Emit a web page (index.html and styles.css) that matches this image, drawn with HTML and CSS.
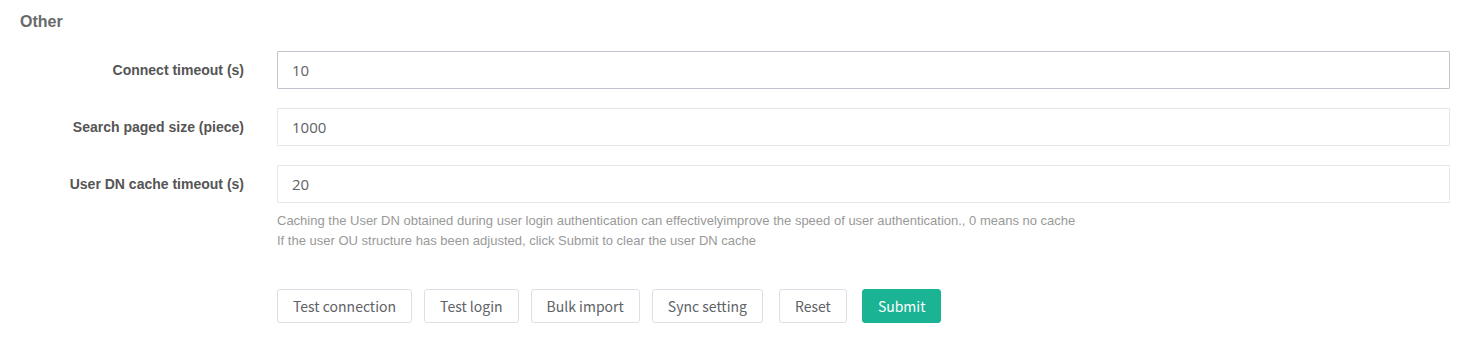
FILE: index.html
```html
<!DOCTYPE html>
<html lang="en">
  <head>
    <meta charset="UTF-8" />
    <meta name="viewport" content="width=device-width, initial-scale=1.0" />
    <title>LDAP setting</title>
    <link rel="stylesheet" href="styles.css">
  </head>
  <body>
    <main class="panel">
      <h3 class="panel__title">Other</h3>

      <form class="form">
        <div class="form__row">
          <label class="form__label">Connect timeout (s)</label>
          <div class="form__field">
            <input class="form__input form__input--hover" type="text" value="10" />
          </div>
        </div>

        <div class="form__row">
          <label class="form__label">Search paged size (piece)</label>
          <div class="form__field">
            <input class="form__input" type="text" value="1000" />
          </div>
        </div>

        <div class="form__row">
          <label class="form__label">User DN cache timeout (s)</label>
          <div class="form__field">
            <input class="form__input" type="text" value="20" />
            <p class="form__help">
              Caching the User DN obtained during user login authentication can effectivelyimprove the speed of user authentication., 0 means no cache<br />
              If the user OU structure has been adjusted, click Submit to clear the user DN cache
            </p>
          </div>
        </div>

        <div class="form__row form__row--actions">
          <div class="form__label"></div>
          <div class="form__buttons">
            <button class="btn" type="button">Test connection</button>
            <button class="btn" type="button">Test login</button>
            <button class="btn" type="button">Bulk import</button>
            <button class="btn" type="button">Sync setting</button>
            <button class="btn btn--reset" type="reset">Reset</button>
            <button class="btn btn--primary" type="button">Submit</button>
          </div>
        </div>
      </form>
    </main>
  </body>
</html>
```

FILE: styles.css
```css
* {
  margin: 0;
  padding: 0;
  box-sizing: border-box;
}

body {
  font-family: "Liberation Sans", Arial, sans-serif;
  color: #555;
  background-color: #fff;
}

.panel {
  padding: 12px 25px 0 20px;
}

.panel__title {
  font-size: 16px;
  line-height: 20px;
  font-weight: bold;
  color: #676a6c;
  margin-bottom: 19px;
}

.form__row {
  display: flex;
  align-items: flex-start;
  margin-bottom: 19px;
}

.form__row--actions {
  margin-top: 38px;
}

.form__label {
  flex: 0 0 224px;
  text-align: right;
  font-size: 14px;
  font-weight: bold;
  line-height: 38px;
  color: #555;
}

.form__field {
  flex: 1;
  margin-left: 33px;
}

.form__input {
  display: block;
  width: 100%;
  height: 38px;
  padding: 0 14px;
  border: 1px solid #e5e6e7;
  border-radius: 1px;
  font-family: "Open Sans", "Noto Sans", sans-serif;
  font-size: 15px;
  color: #606266;
  outline: none;
}

.form__input--hover {
  border-color: #c0c4cc;
}

.form__help {
  margin-top: 8px;
  font-size: 13px;
  line-height: 20px;
  color: #999;
}

.form__buttons {
  display: flex;
  margin-left: 33px;
}

.btn {
  height: 34px;
  padding: 0 15px;
  margin-right: 12px;
  border: 1px solid #dcdfe6;
  border-radius: 3px;
  background-color: #fff;
  font-family: "Noto Sans CJK SC", "Noto Sans", sans-serif;
  font-size: 14px;
  color: #606266;
  cursor: pointer;
}

.btn--reset {
  margin-left: 4px;
  margin-right: 15px;
}

.btn--primary {
  background-color: #1ab394;
  border-color: #1ab394;
  color: #fff;
}
```
